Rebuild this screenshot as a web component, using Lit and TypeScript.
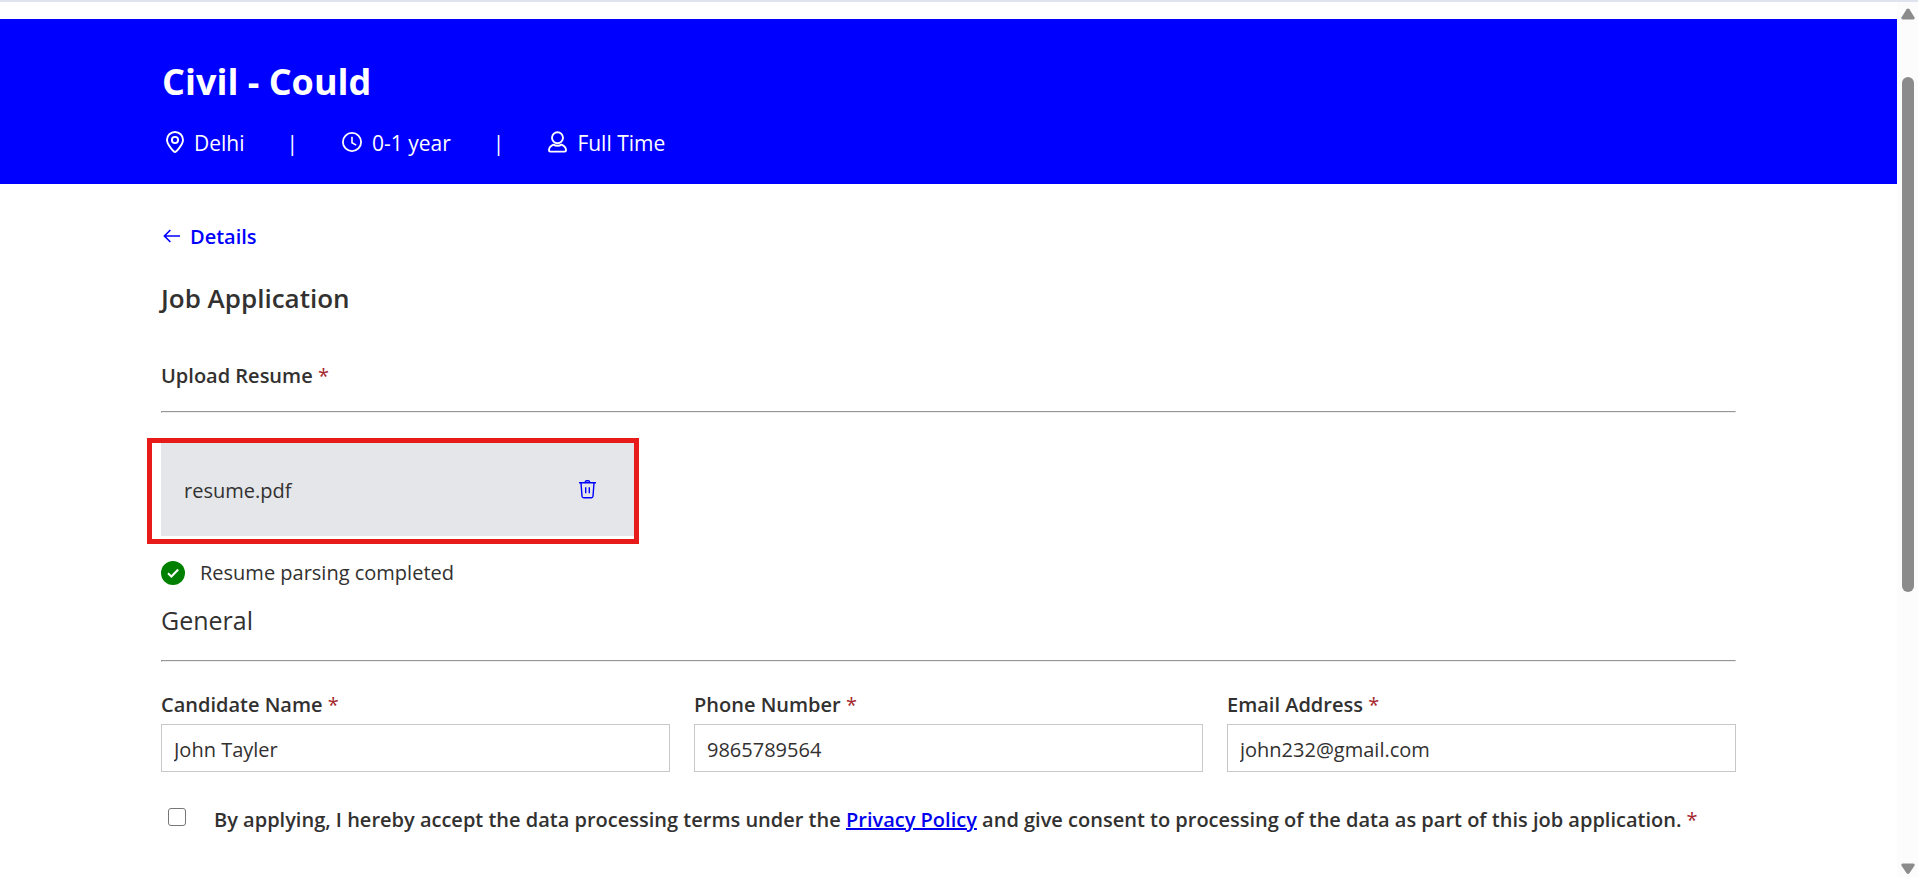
import { LitElement, html, css, svg } from "lit";
import { customElement, property, state } from "lit/decorators.js";

const pinIcon = svg`<svg width="18" height="22" viewBox="0 0 18 22" fill="none" stroke="currentColor" stroke-width="1.9" aria-hidden="true">
  <path d="M9 21C8.200 21 1 14 1 8.800C1 4.400 4.600 1 9 1s8 3.400 8 7.800C17 14 9.800 21 9 21z"/><circle cx="9" cy="9" r="3.100"/></svg>`;

const clockIcon = svg`<svg width="20" height="22" viewBox="0 0 20 22" fill="none" stroke="currentColor" stroke-width="1.800" aria-hidden="true">
  <circle cx="10" cy="11" r="9.100"/><path d="M10 5.800v6l4.200 2.300" stroke-width="1.600"/></svg>`;

const personIcon = svg`<svg width="19" height="22" viewBox="0 0 19 22" fill="none" stroke="currentColor" stroke-width="1.900" stroke-linejoin="round" aria-hidden="true">
  <circle cx="9.500" cy="6.800" r="5.500"/><path d="M5.400 13.600C2.600 14.800 1 17 1 19.200c0 .9.500 1.400 1.300 1.400h14.400c.8 0 1.300-.5 1.300-1.400 0-2.200-1.600-4.400-4.400-5.600c-1.200.8-2.600 1.200-4.100 1.200s-2.900-.4-4.100-1.200z"/></svg>`;

const arrowIcon = svg`<svg width="17" height="14" viewBox="0 0 17 14" fill="none" stroke="currentColor" stroke-width="1.600" aria-hidden="true">
  <path d="M17 7H1.400M7.400 1L1.400 7l6 6"/></svg>`;

const trashIcon = svg`<svg width="17" height="19" viewBox="0 0 17 19" fill="none" stroke="currentColor" stroke-width="1.400" aria-hidden="true">
  <path d="M0 2.800h17M6.200 2.600c0-1.200.6-1.900 1.500-1.900h1.600c.9 0 1.500.7 1.500 1.900M2 3l1 13.200c.1 1 .7 1.500 1.600 1.500h7.800c.9 0 1.500-.5 1.600-1.500L15 3M6.700 7.200v6M10.300 7.200v6"/></svg>`;

const checkIcon = svg`<svg width="24" height="24" viewBox="0 0 24 24" fill="none" aria-hidden="true">
  <circle cx="12" cy="12" r="12" fill="#008000"/><path d="M7 12.200l3.400 3.300 6.800-7" stroke="#fff" stroke-width="2"/></svg>`;

@customElement("job-banner")
class JobBanner extends LitElement {
  @property() heading = "";

  static styles = css`
    :host {
      display: block;
      padding: 39px 162px 26px;
      background: #0000ff;
      color: #fff;
    }
    h1 {
      margin: 0 0 22px;
      font-size: 36px;
      line-height: 48px;
      font-weight: 700;
    }
    ul {
      display: flex;
      margin: 0;
      padding: 0 0 0 4px;
      list-style: none;
      font-size: 21px;
      line-height: 30px;
    }
    li {
      display: flex;
      align-items: center;
      gap: 10px;
    }
    li + li::before {
      content: "|";
      margin: 0 34px 0 42px;
    }
    svg {
      margin-bottom: 2px;
    }
  `;

  render() {
    return html`
      <h1>${this.heading}</h1>
      <ul>
        <li>${pinIcon}<span>Delhi</span></li>
        <li>${clockIcon}<span>0-1 year</span></li>
        <li>${personIcon}<span>Full Time</span></li>
      </ul>
    `;
  }
}

interface Field {
  id: string;
  label: string;
  type: string;
  value: string;
}

@customElement("application-form")
class ApplicationForm extends LitElement {
  @state() fields: Field[] = [
    { id: "name", label: "Candidate Name", type: "text", value: "John Tayler" },
    { id: "phone", label: "Phone Number", type: "tel", value: "9865789564" },
    { id: "email", label: "Email Address", type: "email", value: "john232@gmail.com" },
  ];

  static styles = css`
    :host {
      display: block;
      padding: 39px 161px;
      font-size: 20px;
      line-height: 28px;
      color: #323130;
    }
    .back {
      display: flex;
      align-items: center;
      gap: 10px;
      width: fit-content;
      padding-left: 2px;
      color: #0000ff;
      font-weight: 600;
      text-decoration: none;
    }
    .back svg {
      margin-bottom: 3px;
    }
    h2,
    h3 {
      margin: 0;
      font-size: 26px;
      line-height: 36px;
      font-weight: 600;
    }
    h2 {
      margin: 29px 0 46px;
    }
    h3 {
      margin-bottom: 22px;
      font-size: 25px;
      font-weight: 400;
    }
    .strong {
      font-weight: 600;
    }
    .req {
      color: #a4262c;
      font-weight: 400;
    }
    .upload {
      margin-bottom: 21px;
    }
    hr {
      margin: 0 0 27px;
      border: 1px solid;
      border-color: #979797 #eee #eee #979797;
    }
    .file {
      position: relative;
      box-sizing: border-box;
      display: flex;
      align-items: center;
      justify-content: space-between;
      max-width: 475px;
      height: 96px;
      padding: 5px 40px 0 23px;
      background: #e4e6ea;
    }
    .file::after {
      content: "";
      position: absolute;
      inset: -2px -3px -8px -14px;
      border: 5px solid #e81b1b;
      pointer-events: none;
    }
    button {
      display: flex;
      margin: 0 0 3px;
      padding: 0;
      border: 0;
      background: none;
      color: #0000ff;
    }
    .status {
      display: flex;
      align-items: center;
      gap: 15px;
      margin: 23px 0 15px;
    }
    .grid {
      display: grid;
      grid-template-columns: repeat(3, 1fr);
      gap: 24px;
      padding-top: 2px;
    }
    .field {
      display: flex;
      flex-direction: column;
      gap: 5px;
      min-width: 0;
    }
    .field input {
      box-sizing: border-box;
      width: 100%;
      height: 48px;
      padding: 2px 12px 0;
      border: 1px solid #c8c8c8;
      background: #fff;
      color: inherit;
      font: inherit;
    }
    .consent {
      display: flex;
      align-items: start;
      gap: 28px;
      margin-top: 34px;
      padding-left: 7px;
    }
    .consent input {
      appearance: none;
      flex: none;
      box-sizing: border-box;
      width: 18px;
      height: 18px;
      margin: 2px 0 0;
      border: 1px solid #767676;
      border-radius: 3px;
      background: #fff;
    }
    .consent input:checked {
      background: #0000ff;
    }
    .consent a {
      color: #0000ee;
      text-decoration-thickness: 2px;
    }
  `;

  render() {
    return html`
      <a class="back" href="#details">${arrowIcon}<span>Details</span></a>
      <h2>Job Application</h2>
      <div class="strong upload">Upload Resume <span class="req">*</span></div>
      <hr />
      <div class="file">
        <span>resume.pdf</span>
        <button type="button" aria-label="Delete resume">${trashIcon}</button>
      </div>
      <div class="status">${checkIcon}<span>Resume parsing completed</span></div>
      <h3>General</h3>
      <hr />
      <div class="grid">
        ${this.fields.map(
          (f) => html`
            <div class="field">
              <label class="strong" for=${f.id}>${f.label} <span class="req">*</span></label>
              <input id=${f.id} type=${f.type} .value=${f.value} />
            </div>
          `
        )}
      </div>
      <div class="consent">
        <input id="consent" type="checkbox" />
        <label class="strong" for="consent"
          >By applying, I hereby accept the data processing terms under the
          <a href="#privacy">Privacy Policy</a> and give consent to processing of the data as part of this job
          application. <span class="req">*</span></label
        >
      </div>
    `;
  }
}

@customElement("app-root")
class AppRoot extends LitElement {
  static styles = css`
    :host {
      display: block;
      font-family: "Open Sans", "Noto Sans", sans-serif;
      background: #fff;
    }
    .frame {
      box-sizing: border-box;
      display: flex;
      height: 100vh;
      border-top: 2px solid #dfe3ee;
    }
    main {
      flex: 1;
      min-width: 0;
      padding-top: 17px;
      overflow: hidden;
    }
    .track {
      box-sizing: border-box;
      display: flex;
      flex-direction: column;
      align-items: center;
      width: 21px;
      padding: 6px 0 2px;
      background: #fcfcfc;
      color: #8b8b8b;
    }
    .rail {
      flex: 1;
      display: grid;
      grid-template-rows: 54fr 515fr 268fr;
      width: 12px;
      padding: 3px 0;
    }
    .thumb {
      grid-row: 2;
      border-radius: 6px;
      background: #8b8b8b;
    }
  `;

  render() {
    return html`
      <div class="frame">
        <main>
          <job-banner heading="Civil - Could"></job-banner>
          <application-form></application-form>
        </main>
        <div class="track" aria-hidden="true">
          <svg width="14" height="12" viewBox="0 0 14 12">
            <path d="M5.600 1.200Q7 0 8.400 1.200L13.600 9.500Q14 11.500 12.400 11.500H1.600Q0 11.500.4 9.500z" fill="currentColor" />
          </svg>
          <div class="rail"><div class="thumb"></div></div>
          <svg width="14" height="12" viewBox="0 0 14 12">
            <path d="M5.600 10.300Q7 11.500 8.400 10.300L13.600 2.500Q14 .5 12.400.5H1.600Q0 .5.4 2.500z" fill="currentColor" />
          </svg>
        </div>
      </div>
    `;
  }
}
